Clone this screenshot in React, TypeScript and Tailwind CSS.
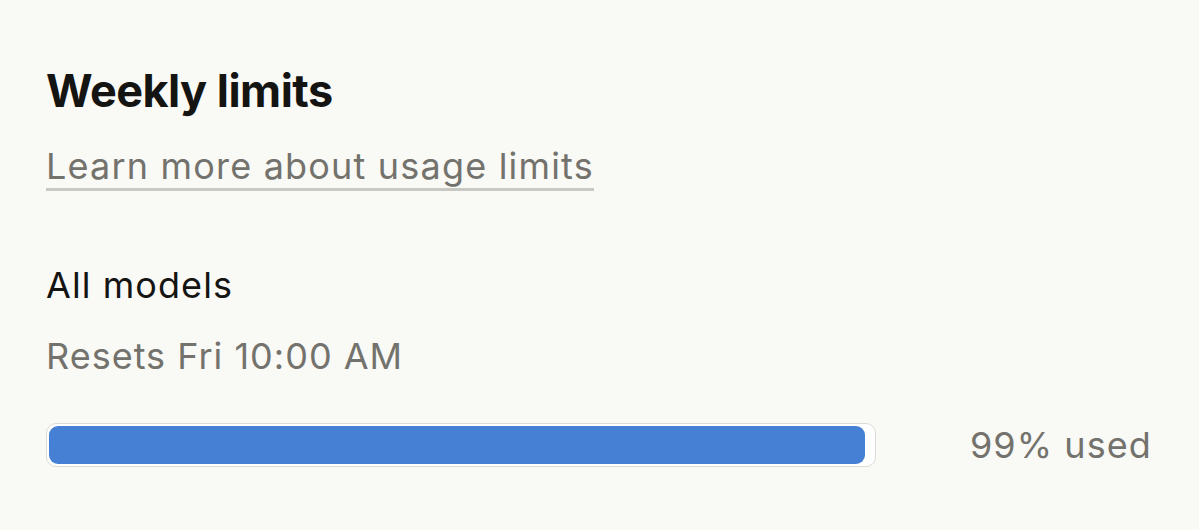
import React from 'react';

const font = { fontFamily: 'Inter, "Noto Sans", sans-serif' };

const UsageBar: React.FC<{ percent: number }> = ({ percent }) => (
  <div className="w-[830px] h-[44px] rounded-[10px] border border-[#dcdbd6] bg-white p-[2px]">
    <div className="h-full rounded-[9px] bg-[#4580d4]" style={{ width: `${percent}%` }} />
  </div>
);

export default function App() {
  return (
    <div className="w-[1199px] h-[530px] bg-[#f9f9f6] pl-[46px] pr-[47px] pt-[64px]" style={font}>
      <h2 className="text-[45px] leading-[54px] font-bold text-[#141413] tracking-[-0.012em]">Weekly limits</h2>
      <a className="mt-[26px] inline-block text-[36px] leading-[44px] tracking-[0.033em] text-[#73726c] border-b-[3px] border-[#c9c8c3]">
        Learn more about usage limits
      </a>
      <div className="mt-[72px] text-[36px] leading-[44px] tracking-[0.03em] text-[#141413]">All models</div>
      <div className="mt-[27px] text-[36px] leading-[44px] tracking-[0.028em] text-[#73726c]">Resets Fri 10:00 AM</div>
      <div className="mt-[45px] flex items-center justify-between">
        <UsageBar percent={99} />
        <span className="text-[36px] leading-[44px] tracking-[0.03em] text-[#73726c]">99% used</span>
      </div>
    </div>
  );
}
